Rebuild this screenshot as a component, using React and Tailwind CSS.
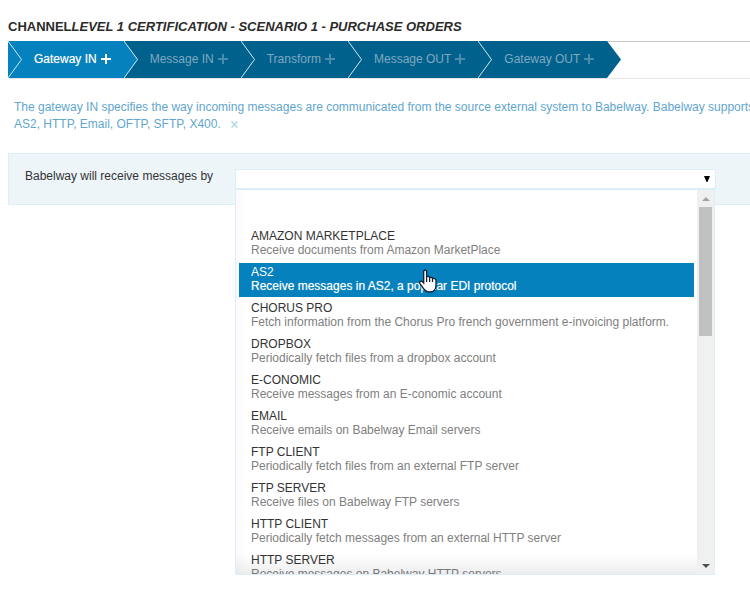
import React, { useState } from "react";

const STEPS = ["Gateway IN", "Message IN", "Transform", "Message OUT", "Gateway OUT"];

const GATEWAYS = [
  { name: "", text: "" },
  { name: "AMAZON MARKETPLACE", text: "Receive documents from Amazon MarketPlace" },
  { name: "AS2", text: "Receive messages in AS2, a popular EDI protocol" },
  { name: "CHORUS PRO", text: "Fetch information from the Chorus Pro french government e-invoicing platform." },
  { name: "DROPBOX", text: "Periodically fetch files from a dropbox account" },
  { name: "E-CONOMIC", text: "Receive messages from an E-conomic account" },
  { name: "EMAIL", text: "Receive emails on Babelway Email servers" },
  { name: "FTP CLIENT", text: "Periodically fetch files from an external FTP server" },
  { name: "FTP SERVER", text: "Receive files on Babelway FTP servers" },
  { name: "HTTP CLIENT", text: "Periodically fetch messages from an external HTTP server" },
  { name: "HTTP SERVER", text: "Receive messages on Babelway HTTP servers" },
];

function Plus() {
  return (
    <svg className="h-[10px] w-[10px]" viewBox="0 0 10 10" fill="none" stroke="currentColor" strokeWidth="2" aria-hidden="true">
      <path d="M0 5H10M5 0V10" />
    </svg>
  );
}

function Chevron({ fill }) {
  return (
    <svg className="absolute top-0 left-0 h-full w-[14px]" viewBox="0 0 14 37" preserveAspectRatio="none" aria-hidden="true">
      <path d="M0 0L14 18.5L0 37Z" className={fill} />
      <path d="M0 0L13.5 18.5L0 37" fill="none" stroke="#d3e8f2" strokeWidth="1" />
    </svg>
  );
}

function Steps() {
  return (
    <nav className="ml-2 flex h-[38px] border-t border-b border-t-[#c9c9c9] border-b-[#e6e6e6]">
      <div className="-mt-px flex h-[37px]">
        {STEPS.map((step, i) => (
          <button
            key={step}
            type="button"
            aria-current={i === 0 ? "step" : undefined}
            className={`relative flex items-center gap-1 pr-[13px] pb-[2px] pl-[26px] text-[12px] whitespace-nowrap ${
              i === 0 ? "bg-[#0581bd] text-white [text-shadow:0_0_1px_#ffffff80]" : "bg-[#00618d] text-[#7fa9c0]"
            }`}
          >
            <Chevron fill={i < 2 ? "fill-[#0581bd]" : "fill-[#00618d]"} />
            <span>{step}</span>
            <span className={i === 0 ? "text-white" : "text-[#4a8cae]"}>
              <Plus />
            </span>
          </button>
        ))}
        <svg className="h-full w-[14px]" viewBox="0 0 14 37" preserveAspectRatio="none" aria-hidden="true">
          <path d="M0 0L14 18.5L0 37Z" fill="#00618d" />
        </svg>
      </div>
    </nav>
  );
}

function HandCursor() {
  return (
    <svg className="absolute top-[6px] left-[180px] h-[24px] w-[18px]" viewBox="0 0 18 24" aria-hidden="true">
      <path
        d="M4.7 2.8C4.7 .4 7.6 .4 7.6 2.8V7.8C8.6 7 10.3 7.4 10.6 8.7C11.6 7.9 13.2 8.4 13.5 9.6C15 9 17 9.8 17 11.8V16.2C17 20.5 14.5 23 10.8 23C7.5 23 6 21.8 4.6 19.6L1.1 14.8C-.1 12.8 2.2 11.2 3.6 12.8L4.7 14Z"
        fill="#fff"
        stroke="#141c30"
        strokeWidth="1.3"
      />
      <path d="M7.6 7.8V13M10.6 8.8V13M13.5 9.8V13" stroke="#141c30" strokeWidth="1.2" fill="none" />
    </svg>
  );
}

function GatewayList({ current, onPick }) {
  return (
    <div className="absolute top-full left-0 flex h-[386px] w-[480px] border border-[#dceef7] bg-white">
      <ul role="listbox" aria-label="Gateway types" className="relative flex flex-1 flex-col gap-[2px] overflow-hidden bg-linear-to-r from-[#fbf9fb] from-0% to-white to-2% px-[3px] pt-px">
        {GATEWAYS.map((g) => {
          const on = g.name === current;
          return (
            <li
              key={g.name}
              role="option"
              aria-selected={on}
              onClick={() => onPick(g.name)}
              className={`relative h-[34px] shrink-0 px-3 py-[2px] text-[12px] leading-[14px] whitespace-nowrap ${
                on ? "bg-[#0581bd] text-white" : "text-[#333333]"
              }`}
            >
              <div>{g.name}</div>
              <div className={on ? "[text-shadow:0_0_1px_#ffffff80]" : "text-[#808080]"}>{g.text}</div>
              {on && <HandCursor />}
            </li>
          );
        })}
        <li role="presentation" className="pointer-events-none absolute inset-x-0 bottom-0 h-5 bg-linear-to-b from-transparent to-black/7" />
      </ul>
      <div aria-hidden="true" className="flex w-[17px] flex-col items-center bg-[#f0f0f0]">
        <div className="flex h-[17px] items-center">
          <svg className="h-1 w-[8px]" viewBox="0 0 8 4"><path d="M0 4L4 0L8 4Z" fill="#a3a3a3" /></svg>
        </div>
        <div className="h-[129px] w-[13px] bg-[#c1c1c1]" />
        <div className="mt-auto flex h-[17px] items-center">
          <svg className="h-1 w-[8px]" viewBox="0 0 8 4"><path d="M0 0L4 4L8 0Z" fill="#505050" /></svg>
        </div>
      </div>
    </div>
  );
}

export default function App() {
  const [current, setCurrent] = useState("AS2");
  return (
    <main className="min-h-screen overflow-hidden bg-white pt-[18px] font-['Liberation_Sans',Arial,sans-serif] text-[12px] text-[#333333]">
      <h1 className="mb-[5px] ml-2 text-[13px] leading-[18px] font-bold whitespace-nowrap text-[#2b2b2b]">
        CHANNEL<em>LEVEL 1 CERTIFICATION - SCENARIO 1 - PURCHASE ORDERS</em>
      </h1>
      <Steps />
      <p className="mt-5 ml-[14px] leading-[17px] whitespace-nowrap text-[#5fa6d0]">
        The gateway IN specifies the way incoming messages are communicated from the source external system to Babelway. Babelway supports
        <br />
        AS2, HTTP, Email, OFTP, SFTP, X400.
        <button type="button" aria-label="Close" className="ml-[10px] text-[#b5d5e8]">
          <svg className="h-[7px] w-[7px]" viewBox="0 0 7 7" fill="none" stroke="currentColor" strokeWidth="1.5" aria-hidden="true">
            <path d="M.5 .5L6.5 6.5M6.5 .5L.5 6.5" />
          </svg>
        </button>
      </p>
      <section className="mt-5 ml-2 flex h-[52px] border border-r-0 border-[#dceef7] bg-[#edf5f9] pt-[15px] pl-4">
        <label htmlFor="gateway" className="w-[210px] shrink-0 leading-[14px]">
          Babelway will receive messages by
        </label>
        <div className="relative z-10 h-5 w-[481px] shrink-0">
          <select id="gateway" className="block h-5 w-full appearance-none border border-[#dceef7] bg-white px-2">
            <option value=""></option>
          </select>
          <svg className="pointer-events-none absolute top-[7px] right-[6px] h-[6px] w-[6px]" viewBox="0 0 6 6" aria-hidden="true">
            <path d="M0 0H6L3.5 6H2.5Z" fill="#000" />
          </svg>
          <GatewayList current={current} onPick={setCurrent} />
        </div>
      </section>
    </main>
  );
}
